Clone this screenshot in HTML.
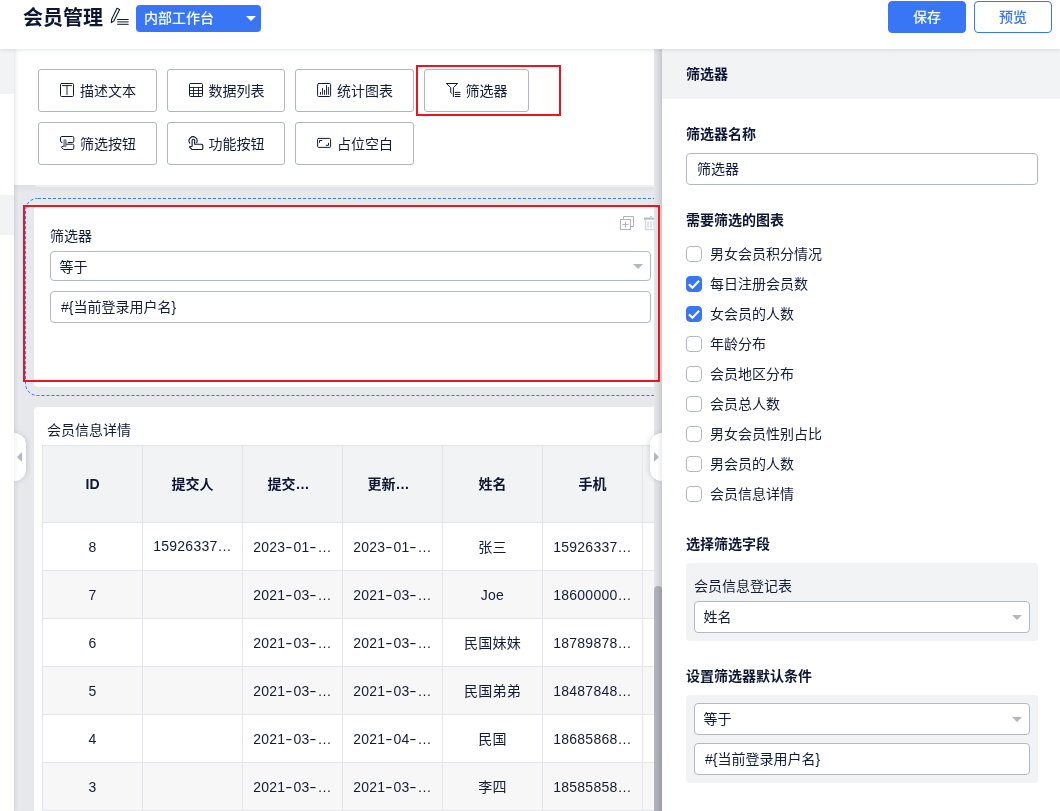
<!DOCTYPE html>
<html lang="zh-CN">
<head>
<meta charset="utf-8">
<title>会员管理</title>
<style>
*{box-sizing:border-box;margin:0;padding:0}
html,body{width:1060px;height:811px;overflow:hidden;background:#fff}
body{position:relative;font-family:"Liberation Sans","Noto Sans CJK SC",sans-serif;font-size:14px;color:#111c39;line-height:20px;will-change:transform}
.abs{position:absolute}
/* header */
#hdr{position:absolute;left:0;top:0;width:1060px;height:49px;background:#fff;z-index:30;box-shadow:0 1px 4px rgba(31,45,61,.13)}
#title{position:absolute;left:23px;top:5px;font-size:20px;line-height:26px;font-weight:700;color:#0d1734;letter-spacing:0}
#ws{position:absolute;left:136px;top:5px;width:125px;height:27px;background:#3876f6;border-radius:4px;color:#fff;font-size:14px;line-height:27px;padding-left:8px;font-weight:500}
#ws i{position:absolute;left:109.5px;top:11px;width:0;height:0;border-left:5px solid transparent;border-right:5px solid transparent;border-top:5.5px solid #fff}
.hb{position:absolute;top:1px;width:78px;height:32px;border-radius:4px;font-size:14px;line-height:30px;text-align:center;font-weight:500}
#save{left:888px;background:#3876f6;color:#fff;border:1px solid #3876f6}
#prev{left:974px;background:#fff;color:#3876f6;border:1px solid #3876f6}
/* left strip */
#lstrip{position:absolute;left:0;top:48px;width:14px;height:763px;background:#fff;z-index:5;box-shadow:1px 0 4px rgba(31,45,61,.14)}
#lstrip b{position:absolute;left:0;width:14px;background:#f2f3f5}
/* middle */
#mid{position:absolute;left:14px;top:48px;width:640px;height:763px;background:#e6e8ec;overflow:hidden}
#tools{position:absolute;left:0;top:0;width:640px;height:137px;background:#fff}
.tb{position:absolute;width:118.5px;height:43px;border:1px solid #b0b6c1;border-radius:3px;background:#fff;font-size:14px;line-height:41px;color:#111c39;white-space:nowrap}
.tb svg{position:absolute;left:20px;top:12px;width:16px;height:16px}
.tb span{position:absolute;left:41px;top:1px}
.red{position:absolute;border:2px solid #ea1520;z-index:20}
/* canvas */
#dash{position:absolute;left:11px;top:150px;width:700px;height:198px;border:1px dashed #3876f6;border-radius:12px}
.card{position:absolute;left:20px;width:640px;background:#fff;border-radius:2px}
.inp{position:absolute;border:1px solid #b3b9c4;border-radius:4px;background:#fff;font-size:14px;color:#111c39;padding-left:10px;white-space:nowrap}
.caret{position:absolute;width:0;height:0;border-left:5px solid transparent;border-right:5px solid transparent;border-top:5.5px solid #b3b7c1}
/* table */
#tbl{position:absolute;left:28px;top:397px;border-collapse:collapse;table-layout:fixed;width:700px}
#tbl th,#tbl td{width:100px;border:1px solid #e3e5ea;text-align:center;font-size:14px;color:#111c39;white-space:nowrap;overflow:hidden;padding:0}
#tbl th{height:77px;background:#f2f3f5;font-weight:700;color:#0d1734}
#tbl td{height:48px;background:#fff;letter-spacing:.25px}
.hy{display:inline-block;font-style:normal;width:8px;text-align:center;transform:scaleX(1.55);letter-spacing:0}
#tbl td:nth-child(2){padding-bottom:2px}
#tbl tr:nth-child(odd) td{background:#f7f7f8}
/* handles */
.hnd{position:absolute;top:433px;width:12px;height:48px;background:#fff;z-index:25}
/* scrollbar */
#sb{position:absolute;left:654px;top:48px;width:8px;height:763px;background:linear-gradient(90deg,#e5e7ea,#d6d8dd 60%,#c5c8d0);z-index:15}
#sb i{position:absolute;left:0;top:538px;width:8px;height:240px;border-radius:4px 4px 0 0;background:linear-gradient(90deg,#b4b8bb,#999ea8)}
/* right */
#right{position:absolute;left:662px;top:48px;width:398px;height:763px;background:#fff;z-index:26}
#rt{position:absolute;left:0;top:0;width:398px;height:51px;background:#f2f3f5;font-weight:700;line-height:53px;padding-left:24px;color:#0d1734}
.lab{position:absolute;left:24px;font-weight:700;color:#0d1734;line-height:20px;white-space:nowrap}
.ck{position:absolute;left:24px;width:16px;height:16px;border:1px solid #b3b9c4;border-radius:4px;background:#fff}
.ck.on{background:#3876f6;border-color:#3876f6}
.ck.on svg{position:absolute;left:-1px;top:-1px;width:16px;height:16px}
.ct{position:absolute;left:48px;line-height:20px;white-space:nowrap}
.gbox{position:absolute;left:24px;width:352px;background:#f2f3f5;border-radius:4px}
</style>
</head>
<body>
<div id="hdr">
  <div id="title">会员管理</div>
  <svg class="abs" style="left:108px;top:4px" width="24" height="24" viewBox="108 4 24 24" fill="none" stroke="#0f1a36" stroke-width="1.1" stroke-linejoin="round"><path d="M117 8.3L119.6 9.5L114 20.7L111.4 22.6L111.6 19.4Z"/><path d="M117.2 19.5H128.6M117.2 21.9H128.6M117.2 24.3H128.6" stroke-width="1"/></svg>
  <div id="ws">内部工作台<i></i></div>
  <div class="hb" id="save">保存</div>
  <div class="hb" id="prev">预览</div>
</div>
<div id="lstrip"><b style="top:0;height:46px"></b><b style="top:147px;height:40px"></b></div>

<div id="mid">
  <div id="tools">
    <div class="tb" style="left:24px;top:21px"><svg viewBox="0 0 16 16" fill="none" stroke="#0f1a36" stroke-width="1" stroke-linecap="round" stroke-linejoin="round"><rect x="1.5" y="1.5" width="13" height="13" rx="1"/><path d="M3.5 3.6H12.5"/><path d="M8 4V12.6" stroke-opacity=".62" stroke-width="1.5"/></svg><span>描述文本</span></div>
    <div class="tb" style="left:152.5px;top:21px"><svg viewBox="0 0 16 16" fill="none" stroke="#0f1a36" stroke-width="1" stroke-linecap="round" stroke-linejoin="round"><rect x="1.5" y="1.5" width="13" height="13" rx="1"/><path d="M1.5 5.5H14.5M1.5 8.5H14.5M1.5 11.5H14.5M5.5 5.5V14.5M10.5 5.5V14.5" stroke-width=".9"/></svg><span>数据列表</span></div>
    <div class="tb" style="left:281px;top:21px"><svg viewBox="0 0 16 16" fill="none" stroke="#0f1a36" stroke-width="1" stroke-linecap="round" stroke-linejoin="round"><rect x="1.6" y="1.5" width="13" height="13" rx="1"/><path d="M4.5 10.4V12.4M6.5 6.4V12.4M8.5 8.4V12.4M10.5 3.5V12.4M12.4 5.3V12.4" stroke-opacity=".9"/></svg><span>统计图表</span></div>
    <div class="tb" style="left:409.5px;top:21px;width:105.5px"><svg viewBox="0 0 16 16" fill="none" stroke="#0f1a36" stroke-width="1" stroke-linecap="round" stroke-linejoin="round"><path d="M6.8 11.3L5.7 10.5V5.5L1.3 1.5H12.7L8.4 5.5V14.6"/><path d="M10.2 10.4H15M10.2 12.45H15M10.2 14.5H15"/></svg><span>筛选器</span></div>
    <div class="tb" style="left:24px;top:74px"><svg viewBox="0 0 16 16" fill="none" stroke="#0f1a36" stroke-width="1" stroke-linecap="round" stroke-linejoin="round"><path d="M3 7.5Q1.5 7.5 1.5 6.2V2.8Q1.5 1.5 2.8 1.5H13.5Q14.8 1.5 14.8 2.8V6.2Q14.8 7.5 13.5 7.5H9.2"/><path d="M7.6 9.2H13.5Q14.8 9.2 14.8 10.5V13.2Q14.8 14.5 13.5 14.5H4.6L2.4 12.2Q2.2 11.3 4.4 11.2"/><path d="M6 5.7V10.6" stroke-opacity=".5" stroke-width="3.4"/></svg><span>筛选按钮</span></div>
    <div class="tb" style="left:152.5px;top:74px"><svg viewBox="0 0 16 16" fill="none" stroke="#0f1a36" stroke-width="1" stroke-linecap="round" stroke-linejoin="round"><path d="M1.7 8.1A4.05 4.05 0 1 1 8.7 7.7" stroke-width="1.1"/><path d="M4.1 11.2V5.5Q4.1 4.2 5.35 4.2Q6.65 4.2 6.65 5.5V9.2H13.5Q14.8 9.2 14.8 10.5V13.2Q14.8 14.5 13.5 14.5H3.9L1.6 12.2Q1.4 11.5 4.1 11.2Z" stroke-width="1.15"/></svg><span>功能按钮</span></div>
    <div class="tb" style="left:281px;top:74px"><svg viewBox="0 0 16 16" fill="none" stroke="#0f1a36" stroke-width="1" stroke-linecap="round" stroke-linejoin="round"><rect x="1.6" y="3.4" width="13" height="9" rx="1"/><path d="M3.5 7.4V5.5H5.8M10.2 10.3H12.5V8.3"/></svg><span>占位空白</span></div>
  </div>
  <div class="abs" style="left:0;top:137px;width:640px;height:7px;background:linear-gradient(#dcdee3,rgba(230,232,236,0))"></div><div class="abs" style="left:21px;top:137px;width:619px;height:2px;background:#eeeff1;border-radius:0 0 0 2px"></div>
  <svg class="abs" style="left:0;top:140px" width="640" height="220" viewBox="0 140 640 220" fill="none"><rect x="11.5" y="150.5" width="700" height="197" rx="12" stroke="#3876f6" stroke-width="1" stroke-dasharray="3 2" stroke-dashoffset="-0.5"/></svg>
  <div class="card" style="top:159px;height:180px;border-radius:2px 2px 4px 4px">
    <div class="abs" style="left:16px;top:19px;line-height:20px">筛选器</div>
    <svg class="abs" style="left:585px;top:8px" width="16" height="16" viewBox="0 0 16 16" fill="none" stroke="#aeb3be" stroke-width="1"><rect x="1.5" y="4.5" width="10" height="10"/><path d="M4.5 4.5V1.5H14.5V11.5H11.5M6.5 6.5V12.5M3.5 9.5H9.5"/></svg>
    <svg class="abs" style="left:609px;top:8px" width="16" height="16" viewBox="0 0 16 16" fill="none" stroke="#d3d6dc" stroke-width="1"><path d="M7 1.5H9" stroke="#c3c7cf"/><path d="M1 3.6H15" stroke-width="2.2" stroke="#b9bdc6"/><path d="M2.5 5V14.5H13.5V5" stroke-width="1.4"/><path d="M5 6.5V12.5M8 6.5V12.5M11 6.5V12.5" stroke-width="1.4"/></svg>
    <div class="inp" style="left:16px;top:44px;width:601px;height:30px;line-height:31px;padding-left:8.5px">等于</div>
    <i class="caret" style="left:599px;top:57px"></i>
    <div class="inp" style="left:16px;top:84px;width:601px;height:32px;line-height:30px">#{当前登录用户名}</div>
  </div>
  <div class="card" style="top:359px;height:420px;border-radius:4px">
    <div class="abs" style="left:13px;top:13px;line-height:20px">会员信息详情</div>
  </div>
  <table id="tbl"><tr><th>ID</th><th>提交人</th><th style="padding-right:8px">提交…</th><th style="padding-right:8px">更新…</th><th>姓名</th><th>手机</th><th></th></tr>
  <tr><td>8</td><td>15926337…</td><td>2023<i class="hy">-</i>01<i class="hy">-</i>…</td><td>2023<i class="hy">-</i>01<i class="hy">-</i>…</td><td>张三</td><td>15926337…</td><td></td></tr>
  <tr><td>7</td><td></td><td>2021<i class="hy">-</i>03<i class="hy">-</i>…</td><td>2021<i class="hy">-</i>03<i class="hy">-</i>…</td><td>Joe</td><td>18600000…</td><td></td></tr>
  <tr><td>6</td><td></td><td>2021<i class="hy">-</i>03<i class="hy">-</i>…</td><td>2021<i class="hy">-</i>03<i class="hy">-</i>…</td><td>民国妹妹</td><td>18789878…</td><td></td></tr>
  <tr><td>5</td><td></td><td>2021<i class="hy">-</i>03<i class="hy">-</i>…</td><td>2021<i class="hy">-</i>03<i class="hy">-</i>…</td><td>民国弟弟</td><td>18487848…</td><td></td></tr>
  <tr><td>4</td><td></td><td>2021<i class="hy">-</i>03<i class="hy">-</i>…</td><td>2021<i class="hy">-</i>04<i class="hy">-</i>…</td><td>民国</td><td>18685868…</td><td></td></tr>
  <tr><td>3</td><td></td><td>2021<i class="hy">-</i>03<i class="hy">-</i>…</td><td>2021<i class="hy">-</i>03<i class="hy">-</i>…</td><td>李四</td><td>18585858…</td><td></td></tr>
  </table>
</div>
<div id="sb"><i></i></div>
<div class="hnd" style="left:14px;border-radius:0 12px 12px 0;box-shadow:1px 0 5px rgba(31,45,61,.16);background:linear-gradient(90deg,#f4f5f7,#fff 40%);clip-path:inset(-8px -8px -8px 0)"><i class="abs" style="left:3px;top:19px;width:0;height:0;border-top:5px solid transparent;border-bottom:5px solid transparent;border-right:5px solid #b3b7c1"></i></div>
<div class="hnd" style="left:650px;border-radius:12px 0 0 12px;box-shadow:-1px 0 5px rgba(31,45,61,.16);background:linear-gradient(90deg,#fff 55%,#eceef1)"><i class="abs" style="left:4px;top:19px;width:0;height:0;border-top:5px solid transparent;border-bottom:5px solid transparent;border-left:5px solid #b3b7c1"></i></div>
<div class="red" style="left:416px;top:65px;width:145px;height:51px"></div>
<div class="red" style="left:23px;top:205px;width:637px;height:177px"></div>
<div id="right">
  <div id="rt">筛选器</div>
  <div class="lab" style="top:76px">筛选器名称</div>
  <div class="inp" style="left:24px;top:105px;width:352px;height:32px;line-height:30px">筛选器</div>
  <div class="lab" style="top:162px">需要筛选的图表</div>
  <div class="ck" style="top:198px"></div><div class="ct" style="top:196px">男女会员积分情况</div>
  <div class="ck on" style="top:228px"><svg viewBox="0 0 16 16" fill="none" stroke="#fff" stroke-width="2.1"><path d="M2.9 8.3L6.4 11.8L13.1 4.8"/></svg></div><div class="ct" style="top:226px">每日注册会员数</div>
  <div class="ck on" style="top:258px"><svg viewBox="0 0 16 16" fill="none" stroke="#fff" stroke-width="2.1"><path d="M2.9 8.3L6.4 11.8L13.1 4.8"/></svg></div><div class="ct" style="top:256px">女会员的人数</div>
  <div class="ck" style="top:288px"></div><div class="ct" style="top:286px">年龄分布</div>
  <div class="ck" style="top:318px"></div><div class="ct" style="top:316px">会员地区分布</div>
  <div class="ck" style="top:348px"></div><div class="ct" style="top:346px">会员总人数</div>
  <div class="ck" style="top:378px"></div><div class="ct" style="top:376px">男女会员性别占比</div>
  <div class="ck" style="top:408px"></div><div class="ct" style="top:406px">男会员的人数</div>
  <div class="ck" style="top:438px"></div><div class="ct" style="top:436px">会员信息详情</div>
  <div class="lab" style="top:486px">选择筛选字段</div>
  <div class="gbox" style="top:515px;height:78px"><div class="abs" style="left:8px;top:13px;line-height:20px">会员信息登记表</div><div class="inp" style="left:8px;top:38px;width:336px;height:32px;line-height:30px;padding-left:8.5px">姓名</div><i class="caret" style="left:325.5px;top:52px"></i></div>
  <div class="lab" style="top:618px">设置筛选器默认条件</div>
  <div class="gbox" style="top:647px;height:88px"><div class="inp" style="left:8px;top:8px;width:336px;height:32px;line-height:30px;padding-left:8.5px">等于</div><i class="caret" style="left:325.5px;top:21.5px"></i><div class="inp" style="left:8px;top:48px;width:336px;height:32px;line-height:30px">#{当前登录用户名}</div></div>

</div>
</body>
</html>
